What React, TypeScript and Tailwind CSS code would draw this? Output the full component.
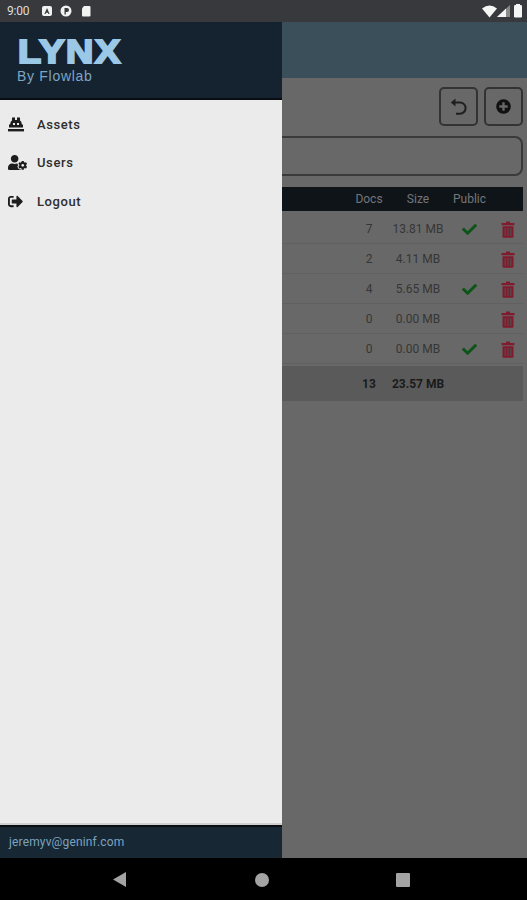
import { FaUserCog, FaSignOutAlt, FaPlusCircle, FaCheck } from "react-icons/fa";

const rows = [
  { docs: "7", size: "13.81 MB", pub: true },
  { docs: "2", size: "4.11 MB", pub: false },
  { docs: "4", size: "5.65 MB", pub: true },
  { docs: "0", size: "0.00 MB", pub: false },
  { docs: "0", size: "0.00 MB", pub: true },
];

const font = { fontFamily: "Roboto, 'Liberation Sans', sans-serif" };

function TrashIcon() {
  return (
    <svg width="14" height="17" viewBox="0 0 14 17">
      <path d="M5 0.5 H9 V2 H13.5 V4.2 H0.5 V2 H5 Z" fill="#801a2d" />
      <path d="M1.5 5.2 H12.5 V15.5 A1.3 1.3 0 0 1 11.2 16.8 H2.8 A1.3 1.3 0 0 1 1.5 15.5 Z" fill="#801a2d" />
      <rect x="3.5" y="7" width="1.4" height="8" fill="#5e4449" />
      <rect x="6.3" y="7" width="1.4" height="8" fill="#5e4449" />
      <rect x="9.1" y="7" width="1.4" height="8" fill="#5e4449" />
    </svg>
  );
}

function AssetsIcon() {
  return (
    <svg width="16" height="15" viewBox="0 0 16 15">
      <path d="M4 0.5 H7 V3 H9 V0.5 H12 V3.5 L13.5 5 V6.5 L15 8 V10.5 H1 V8 L2.5 6.5 V5 L4 3.5 Z" fill="#1d1d1d" />
      <rect x="5" y="6" width="2" height="2" fill="#ebebeb" />
      <rect x="9" y="6" width="2" height="2" fill="#ebebeb" />
      <rect x="0" y="12" width="16" height="2.4" fill="#1d1d1d" />
    </svg>
  );
}

function UndoIcon() {
  return (
    <svg width="18" height="17" viewBox="0 0 18 17">
      <path d="M5 4.5 H10 A5.6 5.6 0 0 1 10 15.7 H6" fill="none" stroke="#1f1f1f" strokeWidth="2" />
      <path d="M5.5 0.5 V8.5 L0.8 4.5 Z" fill="#1f1f1f" />
    </svg>
  );
}

function StatusBar() {
  return (
    <div className="h-[22px] shrink-0 bg-[#37393c] flex items-center pl-[7px] pr-[3px] text-[#dedede]">
      <span className="text-[12px] tracking-[-0.2px] w-[35px]">9:00</span>
      <svg width="50" height="14" viewBox="0 0 50 14">
        <rect x="0" y="2" width="10" height="10" rx="2" fill="#f2f2f2" />
        <path d="M5 4 L7.6 10 H6.4 L5.9 8.7 H4.1 L3.6 10 H2.4 Z" fill="#37393c" />
        <circle cx="24" cy="7" r="5.5" fill="#f2f2f2" />
        <path d="M22.5 10.5 V4 H25 a2 2 0 0 1 0 4 H23.8 V10.5 Z" fill="#37393c" />
        <path d="M42 2 H47.5 A1 1 0 0 1 48.5 3 V11.5 A1 1 0 0 1 47.5 12.5 H41 A1 1 0 0 1 40 11.5 V4.5 Z" fill="#f2f2f2" />
      </svg>
      <div className="flex-1" />
      <svg width="42" height="16" viewBox="0 0 42 16">
        <path d="M0 5.5 Q7.5 -0.5 15 5.5 L7.5 14.5 Z" fill="#f5f5f5" />
        <path d="M15 14 L28 2 V14 Z" fill="#8a8a8a" />
        <path d="M15 14 L24 5.5 V14 Z" fill="#f5f5f5" />
        <rect x="32" y="2" width="8" height="12.5" rx="1.2" fill="#f5f5f5" />
        <rect x="34" y="1" width="4" height="2" fill="#f5f5f5" />
      </svg>
    </div>
  );
}

function PageBehind() {
  return (
    <div className="absolute inset-0 bg-[#686868] flex flex-col" style={font}>
      <div className="h-[56px] shrink-0 bg-[#3b4f5b]" />
      <div className="flex justify-end gap-[6px] pr-[4px] pt-[9px]">
        <div className="w-[39px] h-[39px] rounded-[5px] border-2 border-[#333333] flex items-center justify-center">
          <UndoIcon />
        </div>
        <div className="w-[39px] h-[39px] rounded-[5px] border-2 border-[#333333] flex items-center justify-center">
          <FaPlusCircle size={15} color="#111" />
        </div>
      </div>
      <div className="mx-[4px] mt-[10px] h-[40px] rounded-[8px] border-2 border-[#3a3a3a]" />
      <div className="mx-[4px] mt-[11px] h-[24px] bg-[#0f1419] flex items-center text-[12px] text-[#73767a]">
        <div className="flex-1" />
        <div className="w-[36px] mr-[3px] text-center">Docs</div>
        <div className="w-[56px] text-center">Size</div>
        <div className="w-[47px] text-center">Public</div>
        <div className="w-[30px]" />
      </div>
      <div className="mx-[4px] mt-[3px]">
        {rows.map((r, i) => (
          <div key={i} className="h-[30px] pt-[1px] flex items-center border-b border-[#606060] text-[12px] text-[#363636]">
            <div className="flex-1" />
            <div className="w-[36px] mr-[3px] text-center">{r.docs}</div>
            <div className="w-[56px] text-center whitespace-nowrap">{r.size}</div>
            <div className="w-[47px] flex justify-center">{r.pub && <FaCheck size={15} color="#0b5518" />}</div>
            <div className="w-[30px] flex justify-center"><TrashIcon /></div>
          </div>
        ))}
        <div className="mt-[2px] h-[35px] bg-[#5a5a5a] flex items-center text-[12px] font-bold text-[#1a1a1a]">
          <div className="flex-1" />
          <div className="w-[36px] mr-[3px] text-center">13</div>
          <div className="w-[56px] text-center whitespace-nowrap">23.57 MB</div>
          <div className="w-[77px]" />
        </div>
      </div>
    </div>
  );
}

function MenuItem({ icon, label }: { icon: React.ReactNode; label: string }) {
  return (
    <div className="h-[38.5px] flex items-center pl-[8px] text-[13px] font-medium tracking-[0.6px] text-[#2e2e2e]">
      <div className="w-[29px] flex items-center">{icon}</div>
      {label}
    </div>
  );
}

function Drawer() {
  return (
    <div className="absolute left-0 top-0 bottom-0 w-[282px] flex flex-col bg-[#ebebeb]" style={font}>
      <div className="h-[78px] shrink-0 bg-[#15222f] border-b-2 border-[#0a0d11] pl-[18px] pt-[15px]">
        <div
          className="text-[34px] leading-[28px] font-bold tracking-[1.5px] origin-left scale-x-[1.11] text-[#9ac8e6] [-webkit-text-stroke:2.2px_#9ac8e6]"
          style={{ fontFamily: "'Liberation Sans', Arial, sans-serif" }}
        >
          LYNX
        </div>
        <div
          className="text-[14px] leading-[15px] mt-[4px] -ml-[1px] tracking-[0.7px] text-[#7da6c4]"
          style={{ fontFamily: "'Liberation Sans', Arial, sans-serif" }}
        >
          By Flowlab
        </div>
      </div>
      <div className="pt-[5px] flex-1">
        <MenuItem icon={<AssetsIcon />} label="Assets" />
        <MenuItem icon={<FaUserCog size={19} color="#1d1d1d" />} label="Users" />
        <MenuItem icon={<FaSignOutAlt size={15} color="#1d1d1d" />} label="Logout" />
      </div>
      <div className="h-[33px] shrink-0 pb-[2px] bg-[#182734] border-t-2 border-[#0a0d11] flex items-center pl-[9px] text-[12px] tracking-[0.15px] text-[#7ba3bf] shadow-[0_-2px_0_#d0d0d0]">
        jeremyv@geninf.com
      </div>
    </div>
  );
}

function NavBar() {
  return (
    <div className="h-[42px] shrink-0 bg-black relative">
      <svg className="w-full h-full" viewBox="0 0 527 42">
        <path d="M113 21.5 L126 14 V29 Z" fill="#a3a3a3" />
        <circle cx="262" cy="22" r="7" fill="#a3a3a3" />
        <rect x="396" y="15" width="14" height="14" rx="1" fill="#a3a3a3" />
      </svg>
    </div>
  );
}

export default function App() {
  return (
    <div className="w-[527px] h-[900px] flex flex-col overflow-hidden" style={font}>
      <StatusBar />
      <div className="relative flex-1">
        <PageBehind />
        <Drawer />
      </div>
      <NavBar />
    </div>
  );
}
